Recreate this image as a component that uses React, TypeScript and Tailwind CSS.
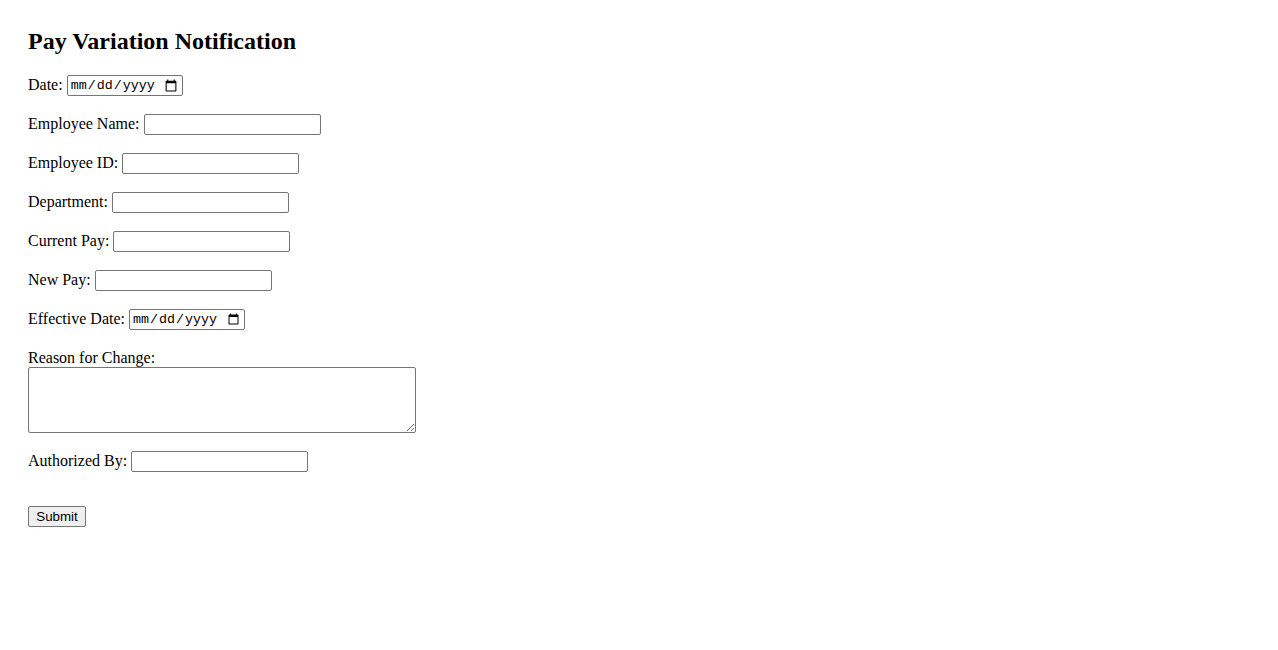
import React from "react";

const inputCls =
  "h-[21px] w-[177px] border border-[#767676] rounded-[2px] px-[2px] py-[1px] bg-white text-[13.333px] font-['Liberation_Sans',Arial,sans-serif] text-black outline-none";
const dateCls =
  "h-[21px] w-[116px] border border-[#767676] rounded-[2px] px-[2px] py-[1px] bg-white text-[13.333px] font-['Liberation_Mono','Courier_New',monospace] text-black outline-none";

function Row({ label, children, className = "" }: { label: string; children: React.ReactNode; className?: string }) {
  return (
    <div className={"flex items-center h-[21px] gap-[4px] " + className}>
      <label className="leading-[18px] pb-[2px] whitespace-nowrap">{label}</label>
      {children}
    </div>
  );
}

export default function App() {
  return (
    <div className="min-h-[650px] bg-white text-black font-['Liberation_Serif','Times_New_Roman',serif] text-[16px] pt-[27px] pl-[28px]">
      <h2 className="text-[24px] font-bold leading-[28px]">Pay Variation Notification</h2>
      <form onSubmit={(e) => e.preventDefault()}>
        <Row label="Date:" className="mt-[20px]">
          <input type="date" className={dateCls} />
        </Row>
        <Row label="Employee Name:" className="mt-[18px]">
          <input type="text" className={inputCls} />
        </Row>
        <Row label="Employee ID:" className="mt-[18px]">
          <input type="text" className={inputCls} />
        </Row>
        <Row label="Department:" className="mt-[18px]">
          <input type="text" className={inputCls} />
        </Row>
        <Row label="Current Pay:" className="mt-[18px]">
          <input type="text" className={inputCls} />
        </Row>
        <Row label="New Pay:" className="mt-[18px]">
          <input type="text" className={inputCls} />
        </Row>
        <Row label="Effective Date:" className="mt-[18px]">
          <input type="date" className={dateCls} />
        </Row>
        <div className="mt-[19px] leading-[18px] h-[18px]">
          <label>Reason for Change:</label>
        </div>
        <textarea className="block w-[388px] h-[66px] border border-[#767676] rounded-[2px] p-[2px] bg-white text-[13.333px] font-['Liberation_Mono',monospace] outline-none" />
        <Row label="Authorized By:" className="mt-[18px]">
          <input type="text" className={inputCls} />
        </Row>
        <button
          type="submit"
          className="block mt-[34px] h-[21px] w-[58px] border border-[#767676] rounded-[2px] bg-[#efefef] text-[13.333px] leading-[15px] font-['Liberation_Sans',Arial,sans-serif] text-black"
        >
          Submit
        </button>
      </form>
    </div>
  );
}
